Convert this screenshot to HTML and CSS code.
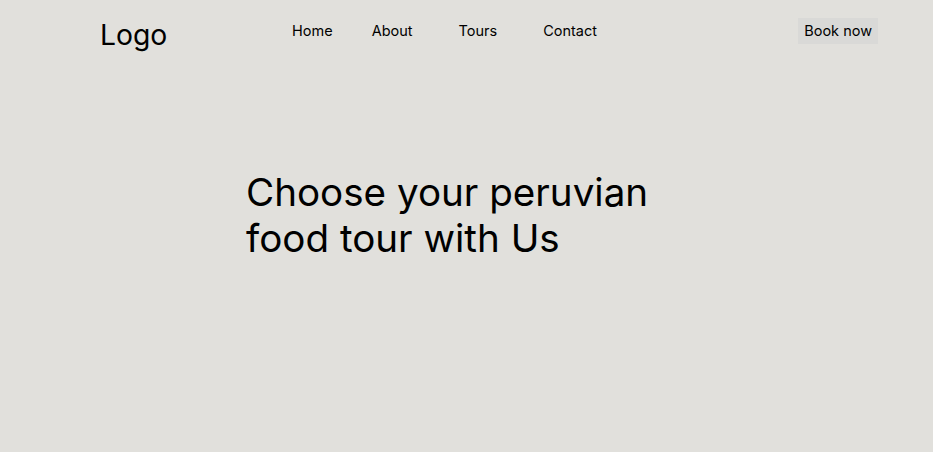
FILE: index.html
```html
<!DOCTYPE html>
<html lang="en">
<head>
<meta charset="utf-8">
<title>Peruvian food tours</title>
<link rel="stylesheet" href="styles.css">
</head>
<body>
<header class="header">
  <div class="logo">Logo</div>
  <nav class="nav">
    <a class="nav-link nav-home" href="#">Home</a>
    <a class="nav-link nav-about" href="#">About</a>
    <a class="nav-link nav-tours" href="#">Tours</a>
    <a class="nav-link nav-contact" href="#">Contact</a>
  </nav>
  <a class="book" href="#">Book now</a>
</header>
<main class="hero">
  <h1 class="hero-title">Choose your peruvian<br>food tour with Us</h1>
</main>
</body>
</html>
```

FILE: styles.css
```css
html, body {
  margin: 0;
  padding: 0;
}
body {
  background: #e1e0dc;
  font-family: Inter, "Noto Sans", sans-serif;
  color: #000;
  width: 933px;
  height: 452px;
  overflow: hidden;
}
.header {
  display: flex;
  align-items: center;
  padding: 18px 55px 0 100px;
  height: 26px;
}
.logo {
  font-size: 28.3px;
  line-height: 1;
  width: 192px;
  margin-top: 8px;
}
.nav {
  display: flex;
  align-items: center;
  margin-top: -2px;
}
.nav-link {
  font-size: 14.5px;
  color: #000;
  text-decoration: none;
}
.nav-about { margin-left: 39px; }
.nav-tours { margin-left: 46px; }
.nav-contact { margin-left: 46px; }
.book {
  margin-left: auto;
  background: #d9d9d7;
  color: #000;
  text-decoration: none;
  font-size: 14.5px;
  line-height: 26px;
  padding: 0 6px;
}
.hero {
  padding: 125px 0 0 246px;
}
.hero-title {
  margin: 0;
  font-weight: 400;
  font-size: 38.6px;
  line-height: 46px;
}
```
